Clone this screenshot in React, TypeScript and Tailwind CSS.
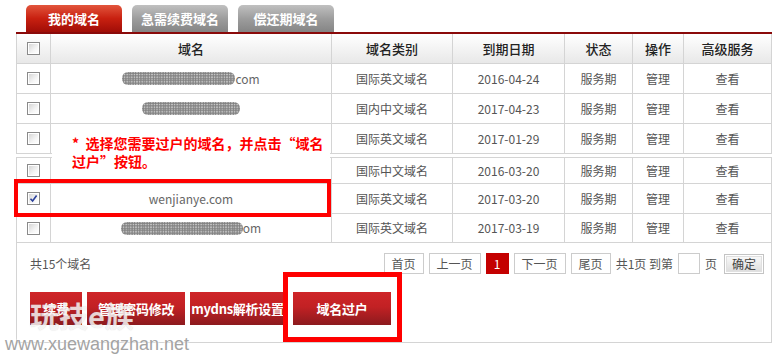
import React from "react";

const COLS = "grid grid-cols-[34px_281px_121px_112px_68px_51px_87px]";
const FONT = { fontFamily: '"Noto Sans CJK SC", "Noto Sans", sans-serif' };

function Checkbox({ checked = false }: { checked?: boolean }) {
  return (
    <div className="w-[13px] h-[13px] border border-[#8a8a8a] bg-white p-[1px]">
      <div className="w-full h-full bg-[linear-gradient(135deg,#d6d6d6,#f4f4f4_60%,#ffffff)] relative">
        {checked && (
          <svg viewBox="0 0 9 9" className="absolute inset-0 w-[9px] h-[9px]">
            <path d="M1.5 4.8 L3.6 7 L7.6 1.5" fill="none" stroke="#2a3f9a" strokeWidth="1.6" />
          </svg>
        )}
      </div>
    </div>
  );
}

function Blob({ w }: { w: number }) {
  return (
    <span
      className="inline-block h-[13px] align-middle rounded-[6px] bg-[radial-gradient(circle,#6a6a6a_0.9px,transparent_1.4px),radial-gradient(circle,#9a9a9a_0.8px,transparent_1.2px)] bg-[length:2.5px_2.5px,3px_3px] opacity-85"
      style={{ width: w }}
    />
  );
}

type Row = {
  domain: React.ReactNode;
  type: string;
  date: string;
  checked?: boolean;
  h: string;
  top?: boolean;
};

const rows: Row[] = [
  { domain: (<><Blob w={113} /><span>com</span></>), type: "国际英文域名", date: "2016-04-24", h: "h-[30px]" },
  { domain: (<Blob w={98} />), type: "国内中文域名", date: "2017-04-23", h: "h-[30px]" },
  { domain: null, type: "国际英文域名", date: "2017-01-29", h: "h-[30px]" },
  { domain: null, type: "国际中文域名", date: "2016-03-20", h: "h-[27px]", top: true },
  { domain: "wenjianye.com", type: "国际英文域名", date: "2017-03-20", checked: true, h: "h-[30px]" },
  { domain: (<><Blob w={122} /><span>om</span></>), type: "国际英文域名", date: "2017-03-19", h: "h-[29px]" },
];

function PageBtn({ children, w, active = false }: { children: React.ReactNode; w: string; active?: boolean }) {
  return (
    <div
      className={`${w} h-[21px] flex items-center justify-center text-[12px] ${
        active ? "bg-[#c40000] text-white" : "border border-[#cccccc] bg-white text-[#555]"
      }`}
    >
      {children}
    </div>
  );
}

function RedBtn({ children, w }: { children: React.ReactNode; w: string }) {
  return (
    <div
      className={`${w} h-[33px] flex items-center justify-center whitespace-nowrap text-white text-[13px] font-bold tracking-[-0.3px] bg-[linear-gradient(to_bottom,#cf2528,#c22124_45%,#8c1a1e)]`}
    >
      {children}
    </div>
  );
}

export default function App() {
  return (
    <div className="relative w-[784px] h-[356px] overflow-hidden bg-white" style={FONT}>
      {/* tabs */}
      <div className="flex gap-[10px] pt-[5px] pl-[26px]">
        <div className="w-[96px] h-[27px] rounded-t-[5px] flex items-center justify-center text-white text-[13px] font-bold bg-[linear-gradient(to_bottom,#e2553c,#c82010_50%,#a00d07)]">
          我的域名
        </div>
        <div className="w-[96px] h-[27px] rounded-t-[5px] flex items-center justify-center text-white text-[13px] font-bold bg-[linear-gradient(to_bottom,#c0c0c0,#9d9d9d_50%,#858585)]">
          急需续费域名
        </div>
        <div className="w-[96px] h-[27px] rounded-t-[5px] flex items-center justify-center text-white text-[13px] font-bold bg-[linear-gradient(to_bottom,#c0c0c0,#9d9d9d_50%,#858585)]">
          偿还期域名
        </div>
      </div>

      <div className="ml-[16px] w-[756px]">
        <div className="h-[2px] bg-[#8a0a0a]" />
        {/* header */}
        <div className={`${COLS} h-[30px] border-l border-r border-b border-[#d4d4d4] bg-[linear-gradient(to_bottom,#ffffff,#e8e8e8)] text-[13px] font-medium text-[#222]`}>
          <div className="flex items-center justify-center border-r border-[#d4d4d4]"><Checkbox /></div>
          <div className="flex items-center justify-center border-r border-[#d4d4d4]">域名</div>
          <div className="flex items-center justify-center border-r border-[#d4d4d4]">域名类别</div>
          <div className="flex items-center justify-center border-r border-[#d4d4d4]">到期日期</div>
          <div className="flex items-center justify-center border-r border-[#d4d4d4]">状态</div>
          <div className="flex items-center justify-center border-r border-[#d4d4d4]">操作</div>
          <div className="flex items-center justify-center">高级服务</div>
        </div>
        {rows.map((r, i) => (
          <React.Fragment key={i}>
            {r.top && <div className="h-[3px]" />}
            <div className={`${COLS} ${r.h} border-l border-r border-b ${r.top ? "border-t" : ""} border-[#d4d4d4] text-[12px] text-[#555]`}>
              <div className="flex items-center justify-center border-r border-[#d4d4d4]"><Checkbox checked={r.checked} /></div>
              <div className="flex items-center justify-center border-r border-[#d4d4d4] text-[#666]">{r.domain}</div>
              <div className="flex items-center justify-center border-r border-[#d4d4d4]">{r.type}</div>
              <div className="flex items-center justify-center border-r border-[#d4d4d4]">{r.date}</div>
              <div className="flex items-center justify-center border-r border-[#d4d4d4]">服务期</div>
              <div className="flex items-center justify-center border-r border-[#d4d4d4]">管理</div>
              <div className="flex items-center justify-center">查看</div>
            </div>
          </React.Fragment>
        ))}
        {/* footer */}
        <div className="h-[100px] border-l border-r border-b border-[#d4d4d4] pt-[10px]">
          <div className="flex justify-between items-start">
            <div className="pl-[13px] text-[12px] text-[#555] leading-[21px]">共15个域名</div>
            <div className="flex items-center gap-[5px] pr-[7px] text-[12px] text-[#555]">
              <PageBtn w="w-[40px]">首页</PageBtn>
              <PageBtn w="w-[52px]">上一页</PageBtn>
              <PageBtn w="w-[23px]" active>1</PageBtn>
              <PageBtn w="w-[52px]">下一页</PageBtn>
              <PageBtn w="w-[40px]">尾页</PageBtn>
              <span className="whitespace-nowrap">共1页 到第</span>
              <div className="w-[22px] h-[21px] border border-[#cccccc] bg-white" />
              <span>页</span>
              <div className="ml-[2px] w-[40px] h-[20px] border border-[#c4c4c4] p-[1px] bg-white">
                <div className="w-full h-full flex items-center justify-center border border-[#e0e0e0] bg-[linear-gradient(to_bottom,#f8f8f8,#dedede)] text-[#444] text-[12px]">
                  确定
                </div>
              </div>
            </div>
          </div>
          <div className="flex mt-[18px] pl-[13px]">
            <RedBtn w="w-[52px]">续费</RedBtn>
            <div className="w-[5px]" />
            <RedBtn w="w-[98px]">管理密码修改</RedBtn>
            <div className="w-[5px]" />
            <RedBtn w="w-[95px]">mydns解析设置</RedBtn>
            <div className="w-[8px]" />
            <RedBtn w="w-[98px]">域名过户</RedBtn>
          </div>
        </div>
      </div>

      {/* annotation */}
      <div className="absolute left-[52px] top-[134px] w-[278px] h-[44px] bg-white pl-[20px] text-[14px] font-bold text-[#ff0000] leading-[18px] whitespace-nowrap">
        *&nbsp;&nbsp;选择您需要过户的域名，并点击“域名
        <br />
        过户”按钮。
      </div>

      {/* highlight boxes */}
      <div className="absolute left-[14px] top-[179px] w-[317px] h-[38px] border-[4px] border-[#ff0000]" />
      <div className="absolute left-[283px] top-[272px] w-[119px] h-[70px] border-[5px] border-[#ff0000]" />

      {/* watermarks */}
      <div
        className="absolute left-[30px] top-[297px] text-[29px] font-bold leading-[36px] text-[rgba(255,255,255,0.78)]"
        style={{ textShadow: "0 0 1px rgba(120,120,120,0.35)" }}
      >
        玩技e族
      </div>
      <div
        className="absolute left-[5px] top-[335px] text-[18px] leading-[18px] text-[#a3a3a3]"
        style={{ fontFamily: '"Liberation Sans", Arial, sans-serif', textShadow: "0 0 2px #fff, 0 0 2px #fff" }}
      >
        www.xuewangzhan.net
      </div>
    </div>
  );
}
